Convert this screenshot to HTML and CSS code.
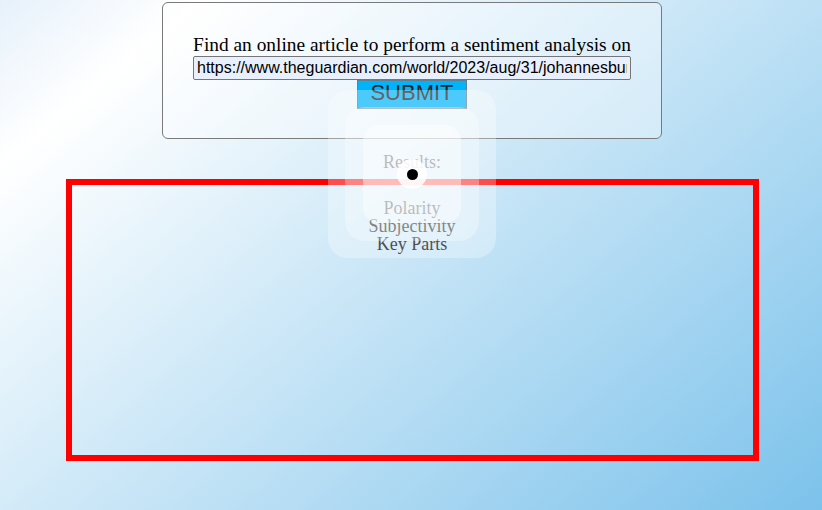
FILE: index.html
```html
<!DOCTYPE html>
<html lang="en">
<head>
<meta charset="utf-8">
<title>Sentiment Analysis</title>
<link rel="stylesheet" href="styles.css">
</head>
<body>
<main class="page">
  <section class="card">
    <div class="prompt">Find an online article to perform a sentiment analysis on</div>
    <input class="url-input" type="text" value="https://www.theguardian.com/world/2023/aug/31/johannesburg-fire-building-death-toll">
    <button class="submit-btn" type="button">SUBMIT</button>
  </section>
  <section class="results-area">
    <div class="results">
      <div class="results-title">Results:</div>
      <div class="results-line">Polarity</div>
      <div class="results-line">Subjectivity</div>
      <div class="results-line">Key Parts</div>
    </div>
    <div class="chart"></div>
  </section>
</main>
<div class="loader">
  <div class="loader-ring loader-middle">
    <div class="loader-ring loader-inner">
      <div class="loader-core"><span class="loader-dot"></span></div>
    </div>
  </div>
</div>
</body>
</html>
```
FILE: styles.css
```css
html, body {
  margin: 0;
  height: 100%;
}
body {
  padding: 0 0 0 2px;
  box-sizing: border-box;
  font-family: "Liberation Serif", "Times New Roman", serif;
  color: #000;
  background: linear-gradient(140deg, #e6f1fb 0%, #ffffff 14%, #7cc2eb 100%);
  overflow: hidden;
}
.page {
  display: flex;
  flex-direction: column;
  align-items: center;
  padding-top: 2px;
}
.card {
  box-sizing: border-box;
  width: 500px;
  height: 137px;
  padding: 30px 0 0;
  border: 1px solid #7a7a7a;
  border-radius: 6px;
  background: rgba(255, 255, 255, 0.35);
  display: flex;
  flex-direction: column;
  align-items: center;
}
.prompt {
  font-size: 19.4px;
  line-height: 23px;
  white-space: nowrap;
}
.url-input {
  box-sizing: border-box;
  width: 438px;
  height: 24px;
  margin: 0;
  padding: 2px 3px;
  border: 1px solid #767676;
  border-radius: 2px;
  background: #e8f0fe;
  font-family: "Liberation Sans", Arial, sans-serif;
  font-size: 16px;
  color: #000;
  outline: none;
}
.submit-btn {
  box-sizing: border-box;
  width: 110px;
  height: 29px;
  margin: 0;
  padding: 0 0 4px;
  border: 1px solid #5f7f93;
  background: #00b4fb;
  font-family: "Liberation Sans", Arial, sans-serif;
  font-size: 22px;
  line-height: 23px;
  color: #222;
}
.results-area {
  position: relative;
  margin-top: 39.5px;
}
.chart {
  box-sizing: border-box;
  width: 693px;
  height: 282px;
  border: 6px solid #ff0000;
}
.results {
  position: absolute;
  left: 0;
  right: 0;
  top: -26px;
  text-align: center;
  font-size: 18px;
  line-height: 18px;
}
.results-title {
  margin-bottom: 28px;
}
.loader {
  position: absolute;
  left: 328px;
  top: 90px;
  width: 168px;
  height: 168px;
  border-radius: 20px;
  background: rgba(255, 255, 255, 0.3);
  display: flex;
  align-items: center;
  justify-content: center;
}
.loader-ring {
  display: flex;
  align-items: center;
  justify-content: center;
  background: rgba(255, 255, 255, 0.3);
}
.loader-middle {
  width: 134px;
  height: 134px;
  border-radius: 20px;
}
.loader-inner {
  width: 98px;
  height: 98px;
  border-radius: 16px;
  background: rgba(255, 255, 255, 0.45);
}
.loader-core {
  width: 30px;
  height: 30px;
  border-radius: 50%;
  background: rgba(255, 255, 255, 0.85);
  display: flex;
  align-items: center;
  justify-content: center;
}
.loader-dot {
  width: 11px;
  height: 11px;
  border-radius: 50%;
  background: #000;
}
```
